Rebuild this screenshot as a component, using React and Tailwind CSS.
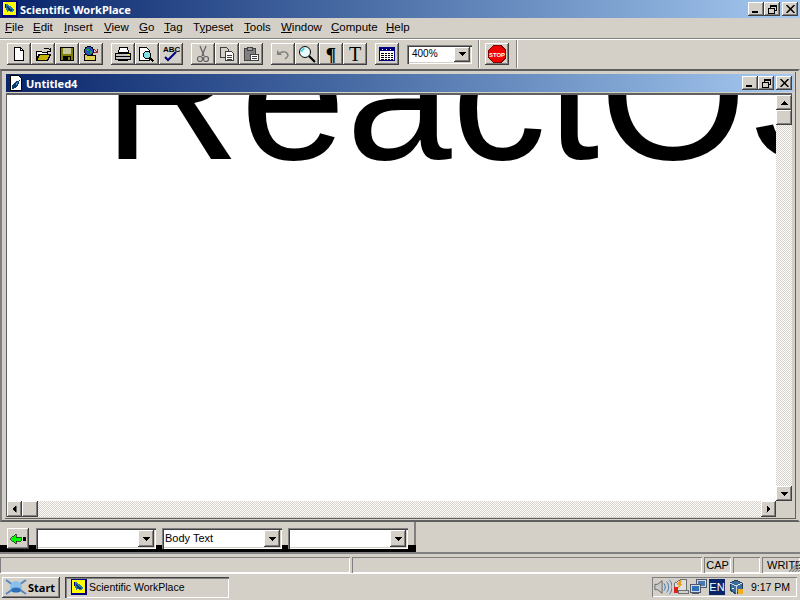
const RAISED = 'bg-[#d4d0c8] shadow-[inset_-1px_-1px_0_#404040,inset_1px_1px_0_#ffffff,inset_-2px_-2px_0_#808080]';
const SUNKEN = 'bg-white shadow-[inset_1px_1px_0_#808080,inset_2px_2px_0_#404040,inset_-1px_-1px_0_#ffffff,inset_-2px_-2px_0_#d4d0c8]';
const THIN_SUNKEN = 'shadow-[inset_1px_1px_0_#808080,inset_-1px_-1px_0_#ffffff]';
const DITHER = 'bg-[repeating-conic-gradient(#d4d0c8_0_25%,#ffffff_0_50%)] bg-[length:2px_2px]';
const BOLD = "font-bold font-['Noto_Sans',sans-serif]";

const Px = ({ children, w = 16, h = 16 }) => (
  <svg width={w} height={h} viewBox={`0 0 ${w} ${h}`} shapeRendering="crispEdges">{children}</svg>
);

const AppIcon = () => (
  <Px>
    <rect x="0" y="0" width="16" height="16" fill="#000080" />
    <rect x="1" y="1" width="13" height="13" fill="#ffff00" />
    <path d="M3 3h2l3 2 4 3v2l-3 1-2-1-2 1-1-4z" fill="#2b7fa8" />
    <path d="M5 5l3 3 3 1-3 1-2-1z" fill="#0b3a6a" />
    <rect x="3" y="3" width="1" height="4" fill="#000080" />
  </Px>
);

const ChildIcon = () => (
  <Px>
    <path d="M2 0h8l3 3v12H2z" fill="#fff" stroke="#000" />
    <path d="M4 10l3-3 5-2-2 5-3 3-3 1z" fill="#0b3a6a" />
    <path d="M7 9l3-2-1 3z" fill="#4fa3c7" />
  </Px>
);

const NewIcon = () => (
  <Px>
    <path d="M3.5 1.5h6l3 3v10h-9z" fill="#fff" stroke="#000" />
    <path d="M9.5 1.5v3h3" fill="none" stroke="#000" />
  </Px>
);

const OpenIcon = () => (
  <Px>
    <path d="M1.5 5.5h5l1 1h5v2h-9l-2 6z" fill="#fff" stroke="#000" />
    <path d="M1.5 14.5l3-6h11l-3 6z" fill="#c8b400" stroke="#000" />
    <path d="M9 2h4l2 2M15 2v3h-3" fill="none" stroke="#000" />
  </Px>
);

const SaveIcon = () => (
  <Px>
    <rect x="1.5" y="1.5" width="13" height="13" fill="#808000" stroke="#000" />
    <rect x="4" y="2" width="8" height="6" fill="#c8c8a0" />
    <rect x="4" y="10" width="8" height="4" fill="#000" />
    <rect x="9" y="11" width="2" height="3" fill="#808000" />
  </Px>
);

const WebFolderIcon = () => (
  <Px>
    <path d="M1.5 8.5h5l1 1h5v5h-11z" fill="#e0d050" stroke="#000" />
    <circle cx="6" cy="5" r="4.5" fill="#2050c0" stroke="#000" />
    <path d="M3 3h3v2H4zM7 5h2v3H7z" fill="#20a040" />
    <path d="M11 3l3 3M14 3v3h-3" fill="none" stroke="#a02020" />
  </Px>
);

const PrintIcon = () => (
  <Px w={18}>
    <path d="M5.5 1.5h8l1 5h-10z" fill="#fff" stroke="#000" />
    <path d="M1.5 7.5h15v6h-15z" fill="#c0c0c0" stroke="#000" />
    <path d="M2 10h14" stroke="#000" />
    <rect x="4" y="13" width="10" height="2" fill="#000" />
    <rect x="13" y="8" width="2" height="1" fill="#ffff00" />
  </Px>
);

const PreviewIcon = () => (
  <Px w={18}>
    <path d="M1.5 1.5h7l3 3v10h-10z" fill="#fff" stroke="#000" />
    <circle cx="9" cy="9" r="3.5" fill="#7fe0e8" stroke="#000" />
    <path d="M11.5 11.5l4 4" stroke="#000" strokeWidth="2" />
  </Px>
);

const SpellIcon = () => (
  <svg width="18" height="18" viewBox="0 0 18 18">
    <text x="1" y="7" fontSize="8" fontWeight="700" fontFamily="'Liberation Sans', sans-serif" fill="#000">ABC</text>
    <path d="M3 12l3 3 8-8" fill="none" stroke="#000080" strokeWidth="2" />
  </svg>
);

const CutIcon = () => (
  <svg width="16" height="18" viewBox="0 0 16 18">
    <path d="M5 1l4 10M11 1L7 11" stroke="#606060" fill="none" strokeWidth="1.2" />
    <circle cx="5" cy="14" r="2.5" fill="none" stroke="#606060" strokeWidth="1.2" />
    <circle cx="11" cy="14" r="2.5" fill="none" stroke="#606060" strokeWidth="1.2" />
  </svg>
);

const CopyIcon = () => (
  <Px>
    <path d="M1.5 1.5h6l2 2v8h-8z" fill="#d4d0c8" stroke="#404040" />
    <path d="M6.5 5.5h6l2 2v7h-8z" fill="#fff" stroke="#404040" />
    <path d="M8 9h5M8 11h5M8 13h5" stroke="#404040" />
  </Px>
);

const PasteIcon = () => (
  <Px>
    <rect x="1.5" y="2.5" width="11" height="12" fill="#808080" stroke="#404040" />
    <rect x="4.5" y="1.5" width="5" height="3" fill="#a0a0a0" stroke="#404040" />
    <rect x="7.5" y="8.5" width="8" height="6" fill="#fff" stroke="#404040" />
    <path d="M9 10h5M9 12h5" stroke="#404040" />
  </Px>
);

const UndoIcon = () => (
  <svg width="16" height="16" viewBox="0 0 16 16">
    <path d="M2 4v5h5z" fill="#808080" />
    <path d="M4 8c3-3 8-3 9 1 0 2-2 3-3 4" fill="none" stroke="#808080" strokeWidth="1.5" />
  </svg>
);

const FindIcon = () => (
  <svg width="18" height="18" viewBox="0 0 18 18">
    <circle cx="7" cy="7" r="5.5" fill="#e8fcfc" stroke="#000" />
    <path d="M3.5 7a4 4 0 0 1 3-3.5" stroke="#30d0e0" strokeWidth="1.5" fill="none" />
    <path d="M11 11l6 6" stroke="#000" strokeWidth="2.2" />
  </svg>
);

const TableIcon = () => (
  <Px w={16} h={16}>
    <rect x="0.5" y="1.5" width="15" height="13" fill="#fff" stroke="#000080" />
    <rect x="1" y="2" width="14" height="3" fill="#000080" />
    <path d="M2 7h12M2 9h12M2 11h12M2 13h12" stroke="#000" />
    <path d="M5 6v8M8 6v8M11 6v8" stroke="#fff" />
    <path d="M3 3h1M7 3h1M11 3h1" stroke="#fff" />
  </Px>
);

const StopIcon = () => (
  <svg width="18" height="18" viewBox="0 0 18 18" shapeRendering="crispEdges">
    <path d="M5 0h8l5 5v8l-5 5H5l-5-5V5z" fill="#800000" />
    <path d="M5.500 1h7L17 5.500v7L12.500 17h-7L1 12.500v-7z" fill="#f00000" />
    <text x="9" y="11.500" textAnchor="middle" fontSize="6" fontWeight="700" fontFamily="'Liberation Sans', sans-serif" fill="#fff">STOP</text>
  </svg>
);

const BackIcon = () => (
  <Px w={18} h={14}>
    <path d="M1 7l6-5v3h5v4H7v3z" fill="#00ff00" stroke="#000" strokeWidth="0.6" />
    <rect x="14" y="5" width="3" height="4" fill="#000" />
  </Px>
);

const DownArrow = () => (
  <svg width="7" height="4" viewBox="0 0 7 4" shapeRendering="crispEdges"><path d="M0 0h7L3.500 4z" fill="#000" /></svg>
);

const StartLogo = () => (
  <svg width="22" height="18" viewBox="0 0 22 18">
    <path d="M1 2l20 14M21 2L1 16" stroke="#4f88c8" strokeWidth="2" />
    <circle cx="11" cy="9" r="6" fill="#8cc0ec" />
    <ellipse cx="11" cy="12" rx="5" ry="2.500" fill="#2f6fb8" />
  </svg>
);

const Speaker = () => (
  <svg width="18" height="18" viewBox="0 0 20 18">
    <path d="M1 6h3l5-4v14l-5-4H1z" fill="#c8c8c8" stroke="#606060" />
    <path d="M11 5c2 2 2 6 0 8M14 3c3 3 3 9 0 12M17 1c4 4 4 12 0 16" fill="none" stroke="#3070b8" />
  </svg>
);

const Battery = () => (
  <Px w={18} h={18}>
    <path d="M2.5 5.500l6-4h6v11h-12z" fill="#e0e0e0" stroke="#707070" />
    <path d="M5 5l4-3 1 2-2 1 2 1-4 4 1-3H5z" fill="#f0a020" />
    <rect x="2" y="9" width="4" height="6" fill="#e02020" />
    <rect x="6.500" y="12.500" width="10" height="3" fill="#d0d0d0" stroke="#707070" />
  </Px>
);

const Monitors = () => (
  <Px w={18} h={16}>
    <rect x="6.500" y="0.500" width="10" height="8" fill="#d0d8e8" stroke="#505868" />
    <rect x="8" y="2" width="7" height="5" fill="#4878b0" />
    <rect x="0.500" y="5.500" width="10" height="8" fill="#d0d8e8" stroke="#505868" />
    <rect x="2" y="7" width="7" height="5" fill="#2f6fb8" />
    <rect x="2" y="14" width="7" height="1" fill="#505868" />
  </Px>
);

const VBoxIcon = () => (
  <Px w={16} h={16}>
    <path d="M8 1l6 3v7l-6 4-6-4V4z" fill="#3c6c9c" stroke="#1f3f60" />
    <path d="M2 4l6 3 6-3M8 7v8" stroke="#c8d8e8" fill="none" />
    <path d="M4 9l2 1M10 5h2" stroke="#fff" />
    <rect x="10" y="10" width="5" height="5" fill="#f0b020" />
  </Px>
);

const tools = [
  [[NewIcon], [OpenIcon], [SaveIcon], [WebFolderIcon]],
  [[PrintIcon], [PreviewIcon], [SpellIcon]],
  [[CutIcon], [CopyIcon], [PasteIcon]],
  [[UndoIcon], [FindIcon], ['para'], ['tee']],
  [[TableIcon]],
];

function ToolButton({ icon: Icon }) {
  return (
    <div className={`w-6 h-[22px] flex items-center justify-center ${RAISED}`}>
      {Icon === 'para' && <span className="text-[19px] leading-none font-bold font-['Liberation_Serif',serif]">¶</span>}
      {Icon === 'tee' && <span className="text-[20px] leading-none font-['Liberation_Serif',serif]">T</span>}
      {typeof Icon !== 'string' && <Icon />}
    </div>
  );
}

function CaptionButtons() {
  return (
    <div className="flex">
      <div className={`w-4 h-[14px] relative ${RAISED}`}>
        <div className="absolute left-[4px] bottom-[3px] w-[6px] h-[2px] bg-black" />
      </div>
      <div className={`w-4 h-[14px] flex items-center justify-center ${RAISED}`}>
        <Px w={9} h={9}>
          <path d="M2.500 2.500v-2h6v5h-2" fill="none" stroke="#000" />
          <path d="M0.500 3.500h6v5h-6z" fill="none" stroke="#000" />
          <path d="M0 3.500h7M2 1h7" stroke="#000" />
        </Px>
      </div>
      <div className={`w-4 h-[14px] ml-[2px] flex items-center justify-center ${RAISED}`}>
        <svg width="9" height="8" viewBox="0 0 9 8"><path d="M0.500 0l8 8M8.500 0l-8 8" stroke="#000" strokeWidth="1.500" /></svg>
      </div>
    </div>
  );
}

function StyleCombo({ text }) {
  return (
    <div className={`w-[120px] h-[21px] flex items-center justify-between pl-[3px] pr-[2px] ${SUNKEN}`}>
      <span className="text-[11px]">{text}</span>
      <div className={`w-4 h-[17px] flex items-center justify-center ${RAISED}`}><DownArrow /></div>
    </div>
  );
}

const menus = [
  ['F', 'ile', 28], ['E', 'dit', 31], ['I', 'nsert', 40], ['V', 'iew', 35], ['G', 'o', 25], ['T', 'ag', 29],
  ['T', 'ypeset', 51, 'y'], ['T', 'ools', 37], ['W', 'indow', 50], ['C', 'ompute', 55], ['H', 'elp', 30],
];

export default function App() {
  return (
    <div className="w-[800px] h-[600px] overflow-hidden flex flex-col bg-[#d4d0c8] text-black text-[11px] leading-none font-['Liberation_Sans',sans-serif]">
      {/* Main title bar */}
      <div className="h-[18px] shrink-0 flex items-center justify-between pl-[2px] pr-[2px] bg-gradient-to-r from-[#0a246a] to-[#a6caf0]">
        <div className={`flex items-center gap-[2px] text-white text-[11px] ${BOLD}`}>
          <AppIcon />
          <span>Scientific WorkPlace</span>
        </div>
        <CaptionButtons />
      </div>

      {/* Menu bar */}
      <div className="h-5 shrink-0 flex items-center pl-[5px] text-[11.5px]">
        {menus.map(([key, rest, width, second]) => (
          <span key={key + rest} className="shrink-0" style={{ width }}>
            {second ? <>T<u>y</u>peset</> : <><u>{key}</u>{rest}</>}
          </span>
        ))}
      </div>

      {/* Main toolbar */}
      <div className="h-[31px] shrink-0 flex items-center pl-[7px] border-t border-t-[#808080] shadow-[inset_0_1px_0_#ffffff]">
        <div className="flex gap-2">
          {tools.map((group, i) => (
            <div key={i} className="flex">
              {group.map(([icon], j) => <ToolButton key={j} icon={icon} />)}
            </div>
          ))}
        </div>
        <div className={`ml-2 w-[65px] h-[19px] flex items-center justify-between pl-[5px] pr-[2px] ${SUNKEN}`}>
          <span className="text-[10px]">400%</span>
          <div className={`w-4 h-[15px] flex items-center justify-center ${RAISED}`}><DownArrow /></div>
        </div>
        <div className="ml-[6px] w-[2px] h-7 bg-white border-l border-l-[#808080]" />
        <div className={`ml-[5px] w-6 h-[22px] flex items-center justify-center ${RAISED}`}><StopIcon /></div>
        <div className="ml-[7px] w-[2px] h-7 bg-white border-l border-l-[#808080]" />
      </div>

      {/* MDI client */}
      <div className="h-[453px] shrink-0 flex flex-col pl-[3px] pr-[2px] pt-[1px] pb-[1px] border-y-2 border-y-[#606060] border-l-2 border-l-[#808080] border-r-2 border-r-[#d4d0c8]">
        <div className="flex-1 min-h-0 flex flex-col p-[2px] pl-[1px] shadow-[inset_-1px_-1px_0_#606060]">
          <div className="h-[18px] shrink-0 flex items-center justify-between pl-[2px] pr-[2px] bg-gradient-to-r from-[#0a246a] to-[#a6caf0]">
            <div className={`flex items-center gap-[2px] text-white text-[11px] ${BOLD}`}>
              <ChildIcon />
              <span>Untitled4</span>
            </div>
            <CaptionButtons />
          </div>

          {/* Document with scroll bars */}
          <div className="flex-1 min-h-0 mt-[1px] mr-[2px] grid grid-cols-[1fr_16px] grid-rows-[1fr_16px] border-t-2 border-t-[#606060] border-l border-l-[#606060]">
            <div className="bg-white overflow-hidden">
              <div className="ml-[96px] -mt-[110px] text-[190px] leading-[216px] whitespace-nowrap">ReactOS</div>
            </div>
            <div className={`flex flex-col justify-between ${DITHER}`}>
              <div>
                <div className={`h-[15px] flex items-center justify-center ${RAISED}`}><div className="rotate-180"><DownArrow /></div></div>
                <div className={`h-[15px] ${RAISED}`} />
              </div>
              <div className={`h-[15px] flex items-center justify-center ${RAISED}`}><DownArrow /></div>
            </div>
            <div className={`flex justify-between ${DITHER}`}>
              <div className="flex">
                <div className={`w-[15px] flex items-center justify-center ${RAISED}`}><div className="rotate-90"><DownArrow /></div></div>
                <div className={`w-4 ${RAISED}`} />
              </div>
              <div className={`w-[15px] flex items-center justify-center ${RAISED}`}><div className="-rotate-90"><DownArrow /></div></div>
            </div>
            <div />
          </div>
        </div>
      </div>

      {/* Format toolbar */}
      <div className="h-[32px] shrink-0 flex items-start border-b-2 border-b-[#808080]">
        <div className="relative w-[416px] h-[30px] pt-[6px] pl-[7px] flex gap-[7px] shadow-[inset_-2px_0_0_#808080]">
          <div className="absolute left-0 right-0 bottom-0 h-[7px] bg-black" />
          <div className={`relative w-[22px] h-[21px] flex items-center justify-center ${RAISED}`}><BackIcon /></div>
          <div className="relative"><StyleCombo text="" /></div>
          <div className="relative -ml-[1px]"><StyleCombo text="Body Text" /></div>
          <div className="relative -ml-[1px]"><StyleCombo text="" /></div>
        </div>
      </div>

      {/* Status bar */}
      <div className="h-[19px] shrink-0 flex items-start gap-[2px] pt-[3px] relative">
        <div className={`w-[350px] h-4 ${THIN_SUNKEN}`} />
        <div className={`w-[350px] h-4 ${THIN_SUNKEN}`} />
        <div className={`w-[27px] h-4 flex items-center justify-center ${THIN_SUNKEN}`}>CAP</div>
        <div className={`w-[27px] h-4 ${THIN_SUNKEN}`} />
        <div className={`flex-1 h-4 pl-[5px] flex items-center overflow-hidden whitespace-nowrap ${THIN_SUNKEN}`}>WRITE</div>
        <svg className="absolute right-0 bottom-[1px]" width="12" height="12" viewBox="0 0 12 12">
          <path d="M12 1L1 12M12 4l-8 8M12 7l-5 5M12 10l-2 2" stroke="#808080" strokeWidth="1.200" />
        </svg>
      </div>

      {/* Task bar */}
      <div className="flex-1 flex items-center pl-[2px] pr-[3px] border-t border-t-white">
        <div className={`w-[58px] h-[21px] flex items-center gap-[1px] pl-[3px] text-[11px] ${BOLD} ${RAISED}`}>
          <StartLogo />
          <span>Start</span>
        </div>
        <div className="ml-[5px] w-[164px] h-[21px] flex items-center gap-[2px] pl-[6px] shadow-[inset_1px_1px_0_#404040,inset_2px_2px_0_#808080,inset_-1px_-1px_0_#ffffff] text-[10.5px]">
          <AppIcon />
          <span>Scientific WorkPlace</span>
        </div>
        <div className={`ml-auto w-[145px] h-[20px] flex items-center pl-[2px] ${THIN_SUNKEN}`}>
          <Speaker />
          <Battery />
          <Monitors />
          <div className="w-4 h-4 ml-[1px] bg-[#0a246a] text-white flex items-center justify-center text-[11px]">EN</div>
          <div className="ml-[3px]"><VBoxIcon /></div>
          <span className="ml-auto mr-[7px] text-[10.5px] whitespace-nowrap">9:17 PM</span>
        </div>
      </div>
    </div>
  );
}
